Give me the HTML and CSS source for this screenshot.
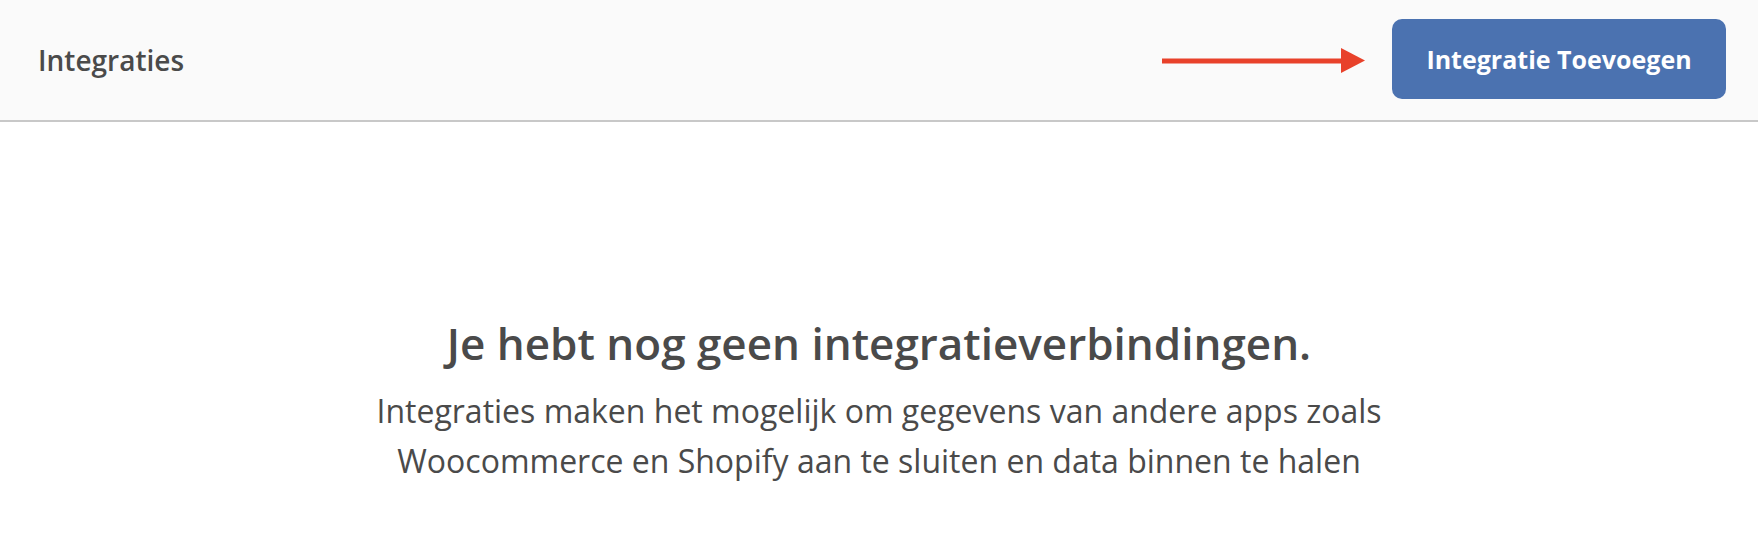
FILE: index.html
```html
<!DOCTYPE html>
<html lang="nl">
<head>
<meta charset="utf-8">
<title>Integraties</title>
<link rel="stylesheet" href="styles.css">
</head>
<body>
<header class="topbar">
  <h1 class="title">Integraties</h1>
  <div class="actions">
    <svg class="arrow" width="204" height="26" viewBox="0 0 204 26" aria-hidden="true">
      <rect x="0" y="10.5" width="182" height="5" fill="#e8412a"/>
      <polygon points="179,0 203,12.5 179,25" fill="#e8412a"/>
    </svg>
    <button class="btn-primary" type="button">Integratie Toevoegen</button>
  </div>
</header>
<main class="empty">
  <h2 class="empty-title">Je hebt nog geen integratieverbindingen.</h2>
  <p class="empty-text">Integraties maken het mogelijk om gegevens van andere apps zoals<br>Woocommerce en Shopify aan te sluiten en data binnen te halen</p>
</main>
</body>
</html>
```
FILE: styles.css
```css
* { box-sizing: border-box; }
html, body { margin: 0; padding: 0; background: #ffffff; }
body {
  font-family: "Open Sans", "Noto Sans", "Liberation Sans", sans-serif;
  color: #4a4a4a;
}
.topbar {
  height: 122px;
  background: #fafafa;
  border-bottom: 2px solid #c8c8c8;
  display: flex;
  align-items: center;
  justify-content: space-between;
  padding: 0 32px 0 38px;
}
.title {
  margin: 0;
  font-size: 28px;
  font-weight: 600;
  color: #4a4a4a;
}
.actions {
  display: flex;
  align-items: center;
  gap: 26px;
}
.arrow { display: block; margin-top: 2px; }
.btn-primary {
  width: 334px;
  height: 80px;
  border: none;
  border-radius: 10px;
  background: #4b72b0;
  color: #ffffff;
  font-family: inherit;
  font-size: 25px;
  font-weight: 700;
  cursor: pointer;
  margin-top: -2px;
}
.empty {
  text-align: center;
  padding-top: 191px;
}
.empty-title {
  margin: 0;
  font-size: 44px;
  font-weight: 600;
  line-height: 60px;
  color: #4a4a4a;
}
.empty-text {
  margin: 13px 0 0;
  font-size: 32px;
  line-height: 50px;
  color: #4a4a4a;
}
```
